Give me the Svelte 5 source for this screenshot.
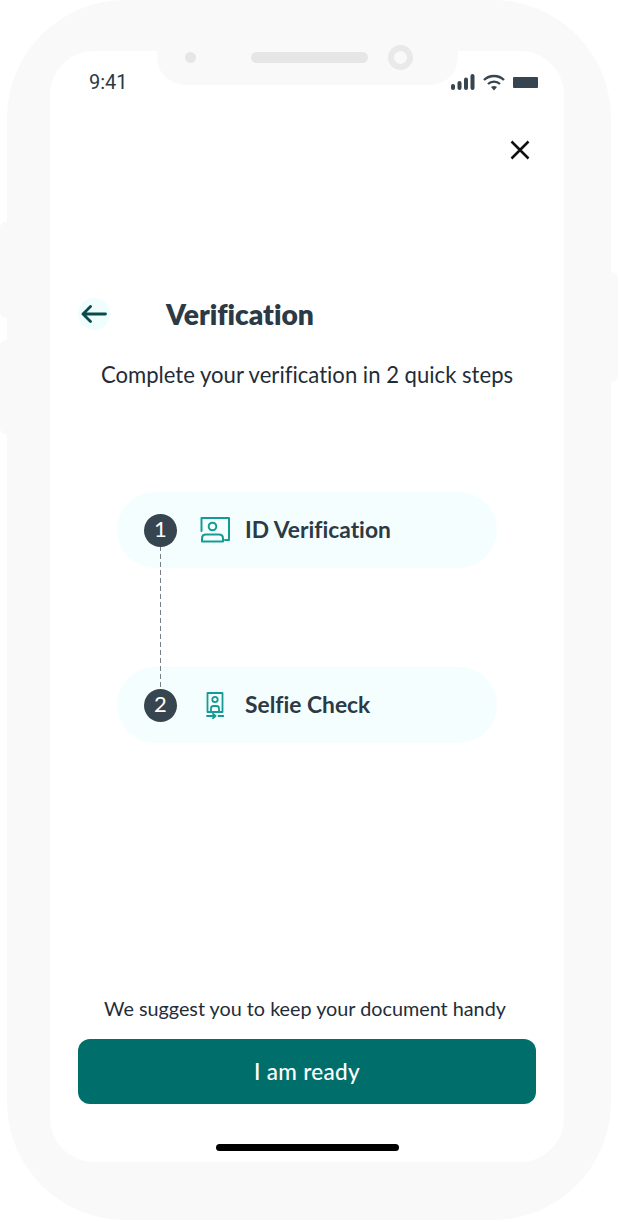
<script>
  let steps = [
    { n: 1, label: "ID Verification", icon: "id" },
    { n: 2, label: "Selfie Check", icon: "selfie" }
  ];
</script>

<div class="phone">
  <span class="side left-top"></span>
  <span class="side left-bottom"></span>
  <span class="side right"></span>

  <div class="notch">
    <span class="sensor"></span>
    <span class="speaker"></span>
    <span class="camera"></span>
  </div>

  <main class="screen">
    <header class="status">
      <span class="time">9:41</span>
      <div class="status-icons">
        <svg width="24" height="16" viewBox="0 0 24 16" fill="#36454f">
          <rect x="0" y="10" width="4" height="6" rx="2" />
          <rect x="6.5" y="7" width="4" height="9" rx="2" />
          <rect x="13" y="3.5" width="4" height="12.5" rx="2" />
          <rect x="19.5" y="0" width="4" height="16" rx="2" />
        </svg>
        <svg width="22" height="17" viewBox="0 0 22 17" fill="none" stroke="#36454f" stroke-width="2.4">
          <path d="M1 6 C6.5 0.6 15.5 0.6 21 6" />
          <path d="M5 10 C8.4 6.8 13.6 6.8 17 10" />
          <path d="M8 13 L11 16.4 L14 13 C12.2 11.6 9.8 11.6 8 13 Z" fill="#36454f" stroke="none" />
        </svg>
        <span class="battery"></span>
      </div>
    </header>

    <div class="close-row">
      <svg width="20" height="20" viewBox="0 0 20 20" stroke="#111" stroke-width="2.5" fill="none">
        <path d="M1.5 1.5 L18.5 18.5 M18.5 1.5 L1.5 18.5" />
      </svg>
    </div>

    <div class="title-row">
      <button class="back" aria-label="Back">
        <svg width="26" height="18" viewBox="0 0 26 18" fill="none" stroke="#0b4a4c" stroke-width="2.8" stroke-linecap="round" stroke-linejoin="round">
          <path d="M24.5 9 H2 M9.5 1.5 L2 9 L9.5 16.5" />
        </svg>
      </button>
      <h1>Verification</h1>
    </div>

    <p class="subtitle">Complete your verification in 2 quick steps</p>

    <div class="steps">
      <span class="dash"></span>
      {#each steps as step}
        <div class="step">
          <span class="num">{step.n}</span>
          <span class="icon">
            {#if step.icon === "id"}
              <svg width="30" height="26" viewBox="0 0 30 26" fill="none" stroke="#149c94" stroke-width="2" stroke-linecap="round" stroke-linejoin="round">
                <path d="M7 1 H29 V23 H25" />
                <path d="M1.5 14 V1 H7" />
                <circle cx="12.5" cy="9.5" r="3.8" />
                <path d="M2 24.6 V21.5 Q2 17.6 6 17.6 H19 Q23 17.6 23 21.5 V24.6 Z" />
              </svg>
            {:else}
              <svg width="18" height="27" viewBox="0 0 18 27" fill="none" stroke="#149c94" stroke-width="1.8" stroke-linecap="round" stroke-linejoin="round">
                <path d="M1.5 20 V1 H16.5 V20 H1.5" />
                <circle cx="9" cy="7.5" r="2.7" />
                <path d="M5 20 V16.5 Q5 14 7.5 14 H10.5 Q13 14 13 16.5 V20" />
                <path d="M1 24 H9.5 M7 21.8 L9.5 24 L7 26.2" />
                <path d="M12.5 24 H17.5" />
              </svg>
            {/if}
          </span>
          <span class="label">{step.label}</span>
        </div>
      {/each}
    </div>

    <div class="bottom">
      <p class="hint">We suggest you to keep your document handy</p>
      <button class="ready">I am ready</button>
      <span class="home"></span>
    </div>
  </main>
</div>

<style>
  :global(body) {
    margin: 0;
    background: #fff;
  }

  .phone {
    position: relative;
    box-sizing: border-box;
    width: 604px;
    height: 1220px;
    margin-left: 7px;
    padding: 51px 47px 58px 43px;
    background: #f9f9f9;
    border-radius: 118px;
    font-family: "Lato", "Noto Sans", sans-serif;
    font-variant-ligatures: none;
    color: #2b3a45;
  }

  .side {
    position: absolute;
    background: #f9f9f9;
  }

  .left-top {
    left: -7px;
    top: 222px;
    width: 7px;
    height: 96px;
    border-radius: 6px 0 0 6px;
  }

  .left-bottom {
    left: -7px;
    top: 340px;
    width: 7px;
    height: 94px;
    border-radius: 6px 0 0 6px;
  }

  .right {
    right: -7px;
    top: 272px;
    width: 7px;
    height: 110px;
    border-radius: 0 6px 6px 0;
  }

  .notch {
    position: absolute;
    left: 150px;
    top: 51px;
    width: 301px;
    height: 34px;
    background: #f9f9f9;
    border-radius: 0 0 28px 28px;
  }

  .sensor {
    position: absolute;
    left: 28px;
    top: 1px;
    width: 11px;
    height: 11px;
    border-radius: 50%;
    background: #e6e6e6;
  }

  .speaker {
    position: absolute;
    left: 94px;
    top: 1px;
    width: 117px;
    height: 11px;
    border-radius: 6px;
    background: #e6e6e6;
  }

  .camera {
    position: absolute;
    left: 231px;
    top: -6px;
    width: 13px;
    height: 13px;
    border: 6px solid #e9e9e9;
    border-radius: 50%;
  }

  .screen {
    display: flex;
    flex-direction: column;
    height: 100%;
    background: #fff;
    border-radius: 44px;
  }

  .status {
    display: flex;
    justify-content: space-between;
    align-items: center;
    height: 22px;
    margin-top: 20px;
    padding: 0 26px 0 39px;
  }

  .time {
    font-family: "Roboto", sans-serif;
    font-size: 20px;
    color: #2b3a45;
  }

  .status-icons {
    display: flex;
    align-items: center;
    gap: 8px;
  }

  .battery {
    width: 25px;
    height: 11px;
    background: #36454f;
    border-radius: 1px;
  }

  .close-row {
    display: flex;
    justify-content: flex-end;
    margin-top: 47px;
    padding-right: 34px;
  }

  .title-row {
    display: flex;
    align-items: center;
    margin-top: 137px;
    padding-left: 28px;
  }

  .back {
    display: flex;
    align-items: center;
    justify-content: center;
    width: 32px;
    height: 32px;
    padding: 0;
    border: 0;
    border-radius: 50%;
    background: #effdfd;
  }

  h1 {
    margin: 0 0 0 56px;
    font-size: 28.2px;
    line-height: 34px;
    font-weight: 800;
    color: #2b3a45;
  }

  .subtitle {
    margin: 31px 0 0;
    text-align: center;
    font-size: 22.1px;
    line-height: 26px;
    color: #1f2d38;
  }

  .steps {
    position: relative;
    display: flex;
    flex-direction: column;
    gap: 99px;
    width: 380px;
    margin: 104px 0 0 67px;
  }

  /* 5px dash, 3px gap */
  .dash {
    position: absolute;
    left: 43px;
    top: 54px;
    width: 1px;
    height: 146px;
    background: repeating-linear-gradient(#777f86 0 5px, transparent 5px 8px);
  }

  .step {
    display: flex;
    align-items: center;
    height: 76px;
    padding-left: 27px;
    background: #f5fefe;
    border-radius: 38px;
  }

  .num {
    position: relative;
    display: flex;
    align-items: center;
    justify-content: center;
    box-sizing: border-box;
    width: 33px;
    height: 33px;
    padding-bottom: 3px;
    flex: none;
    border-radius: 50%;
    background: #36454f;
    color: #fff;
    font-size: 22px;
    font-weight: 400;
  }

  .icon {
    display: flex;
    justify-content: center;
    width: 30px;
    margin-left: 23px;
  }

  .label {
    margin-left: 15px;
    padding-bottom: 2px;
    font-size: 22.8px;
    font-weight: 700;
    color: #2b3a45;
  }

  .bottom {
    display: flex;
    flex-direction: column;
    align-items: center;
    margin-top: auto;
  }

  .hint {
    margin: 0 0 19px -4px;
    font-size: 19.8px;
    line-height: 24px;
    color: #1f2d38;
  }

  .ready {
    width: 458px;
    height: 65px;
    border: 0;
    border-radius: 12px;
    background: #006f6c;
    color: #fff;
    font-family: inherit;
    font-size: 22.5px;
    font-weight: 500;
    letter-spacing: 0.3px;
  }

  .home {
    width: 183px;
    height: 7px;
    margin: 40px 0 11px 1px;
    border-radius: 4px;
    background: #000;
  }
</style>
